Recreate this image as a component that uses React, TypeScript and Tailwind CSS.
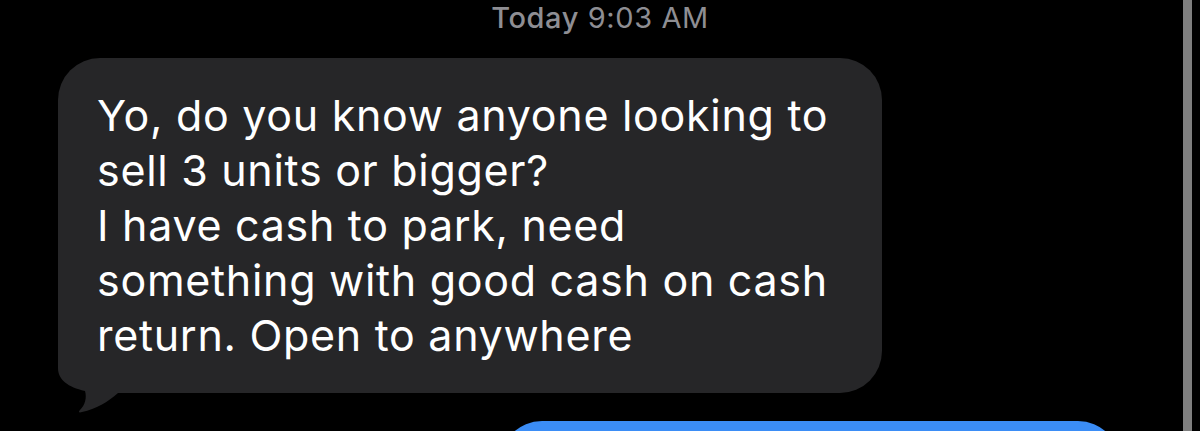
import React from "react";

const lines = [
  "Yo, do you know anyone looking to",
  "sell 3 units or bigger?",
  "I have cash to park, need",
  "something with good cash on cash",
  "return. Open to anywhere",
];

export default function App() {
  return (
    <div
      className="relative w-[1200px] h-[431px] bg-black overflow-hidden"
      style={{ fontFamily: "Inter, 'Liberation Sans', sans-serif" }}
    >
      <div className="flex flex-col">
        <div className="text-center text-[29px] leading-[36px] tracking-[0.6px] text-[#8e8e93]">
          <span className="font-medium">Today</span> 9:03 AM
        </div>
        <div className="relative ml-[58px] mt-[22px] w-[824px] h-[335px] bg-[#262628] rounded-[42px] pl-[39px] pt-[30px]">
          <svg
            className="absolute left-0 top-[282px]"
            width="80"
            height="75"
            viewBox="0 0 80 75"
          >
            <path
              d="M0 0 L0 28 C0 40 10 47 27 51 C29 58 27 65 22 70 C20 72 21 73 24 72 C38 69 50 62 60 53 L80 53 L80 0 Z"
              fill="#262628"
            />
          </svg>
          <div className="relative">
            {lines.map((l) => (
              <div
                key={l}
                className="text-[43px] leading-[55px] tracking-[0.7px] text-white whitespace-nowrap"
              >
                {l}
              </div>
            ))}
          </div>
        </div>
        <div className="ml-[500px] mt-[28px] w-[620px] h-[60px] bg-[#3b8df6] rounded-t-[42px]" />
      </div>
      <div className="absolute right-[8px] top-0 w-[9px] h-full bg-[#7f7f7f]" />
    </div>
  );
}
